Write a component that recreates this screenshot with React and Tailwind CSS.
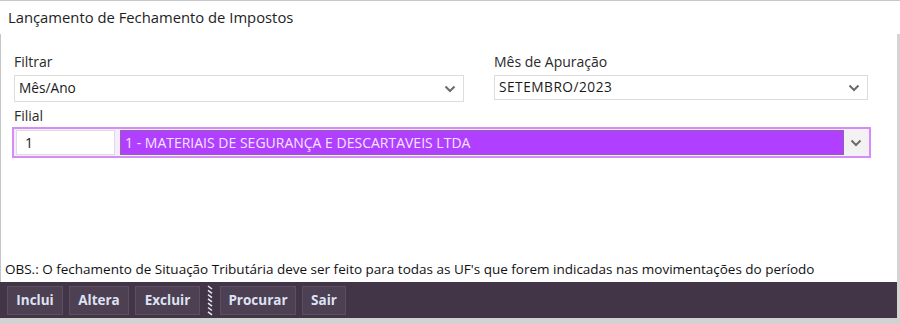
import React from "react";

const Chevron = () => (
  <svg width="12" height="8" viewBox="0 0 12 8">
    <path d="M1.5 1.5 L6 6 L10.5 1.5" fill="none" stroke="#6b6b6b" strokeWidth="2" />
  </svg>
);

const Select = ({ value, className }) => (
  <div className={`flex items-center justify-between border border-[#dcdcdc] bg-white ${className}`}>
    <span className="pl-[4px] text-[13.7px] text-[#1a1a1a]">{value}</span>
    <span className="pr-[7px] flex items-center">
      <Chevron />
    </span>
  </div>
);

const ToolButton = ({ children, className }) => (
  <div className={`flex h-[29px] items-center justify-center border border-[#5c4f60] bg-[#4d4052] text-[13.5px] font-bold text-[#dde3f2] ${className}`}>
    {children}
  </div>
);

const Zigzag = () => (
  <svg width="8" height="32" viewBox="0 0 8 32">
    {[0, 1, 2, 3, 4, 5, 6].map((i) => (
      <path key={i} d={`M2 ${2 + i * 4.3} L6 ${5 + i * 4.3}`} stroke="#e8e8ee" strokeWidth="1.5" />
    ))}
  </svg>
);

export default function App() {
  return (
    <div className="flex h-[324px] w-[900px] flex-col bg-white font-['Open_Sans','Noto_Sans',sans-serif]">
      <div className="flex h-[34px] items-center border-t border-[#c8c8c8] pl-[8px] text-[14.8px] text-[#1e1e1e]">
        Lançamento de Fechamento de Impostos
      </div>
      <div className="flex flex-1 flex-col border-l border-r-[3px] border-l-[#c6c6c6] border-r-[#d4d4d4]">
        <div className="flex pt-[17px] pl-[13px]">
          <div className="flex flex-col">
            <span className="h-[24px] text-[14px] text-[#2a2a2a]">Filtrar</span>
            <Select value="Mês/Ano" className="h-[27px] w-[450px]" />
          </div>
          <div className="ml-[30px] flex flex-col">
            <span className="h-[24px] text-[14px] text-[#2a2a2a]">Mês de Apuração</span>
            <Select value={<span className="tracking-[0.5px]">SETEMBRO/2023</span>} className="h-[25px] w-[374px]" />
          </div>
        </div>
        <div className="flex flex-col pl-[11px] pt-[3px]">
          <span className="h-[22px] pl-[2px] text-[14px] text-[#2a2a2a]">Filial</span>
          <div className="flex h-[31px] w-[859px] items-center border-2 border-[#d48cf6] bg-[#f7ecfd] px-[2px]">
            <div className="flex h-[25px] w-[99px] items-center border border-[#dcdcdc] bg-white pl-[8px] text-[14px] text-[#1a1a1a]">
              1
            </div>
            <div className="ml-[5px] flex h-[25px] flex-1 items-center border border-dotted border-[#6e8a5a] bg-[#b03fff] pl-[4px] text-[14px] text-[#f3e6ff]">
              1 - MATERIAIS DE SEGURANÇA E DESCARTAVEIS LTDA
            </div>
            <div className="flex h-[25px] w-[23px] items-center justify-center bg-[#f2f2f2]">
              <Chevron />
            </div>
          </div>
        </div>
        <div className="flex-1" />
        <div className="h-[23px] pl-[4px] text-[13.5px] leading-[20px] text-[#111]">
          OBS.: O fechamento de Situação Tributária deve ser feito para todas as UF's que forem indicadas nas movimentações do período
        </div>
      </div>
      <div className="flex h-[36px] items-center gap-[6px] border-r-[3px] border-r-[#d4d4d4] bg-[#433548] pl-[7px]">
        <ToolButton className="w-[56px]">Inclui</ToolButton>
        <ToolButton className="w-[60px]">Altera</ToolButton>
        <ToolButton className="w-[65px]">Excluir</ToolButton>
        <Zigzag />
        <ToolButton className="w-[76px]">Procurar</ToolButton>
        <ToolButton className="w-[44px]">Sair</ToolButton>
      </div>
      <div className="h-[6px] bg-[#d2d2d2]" />
    </div>
  );
}
